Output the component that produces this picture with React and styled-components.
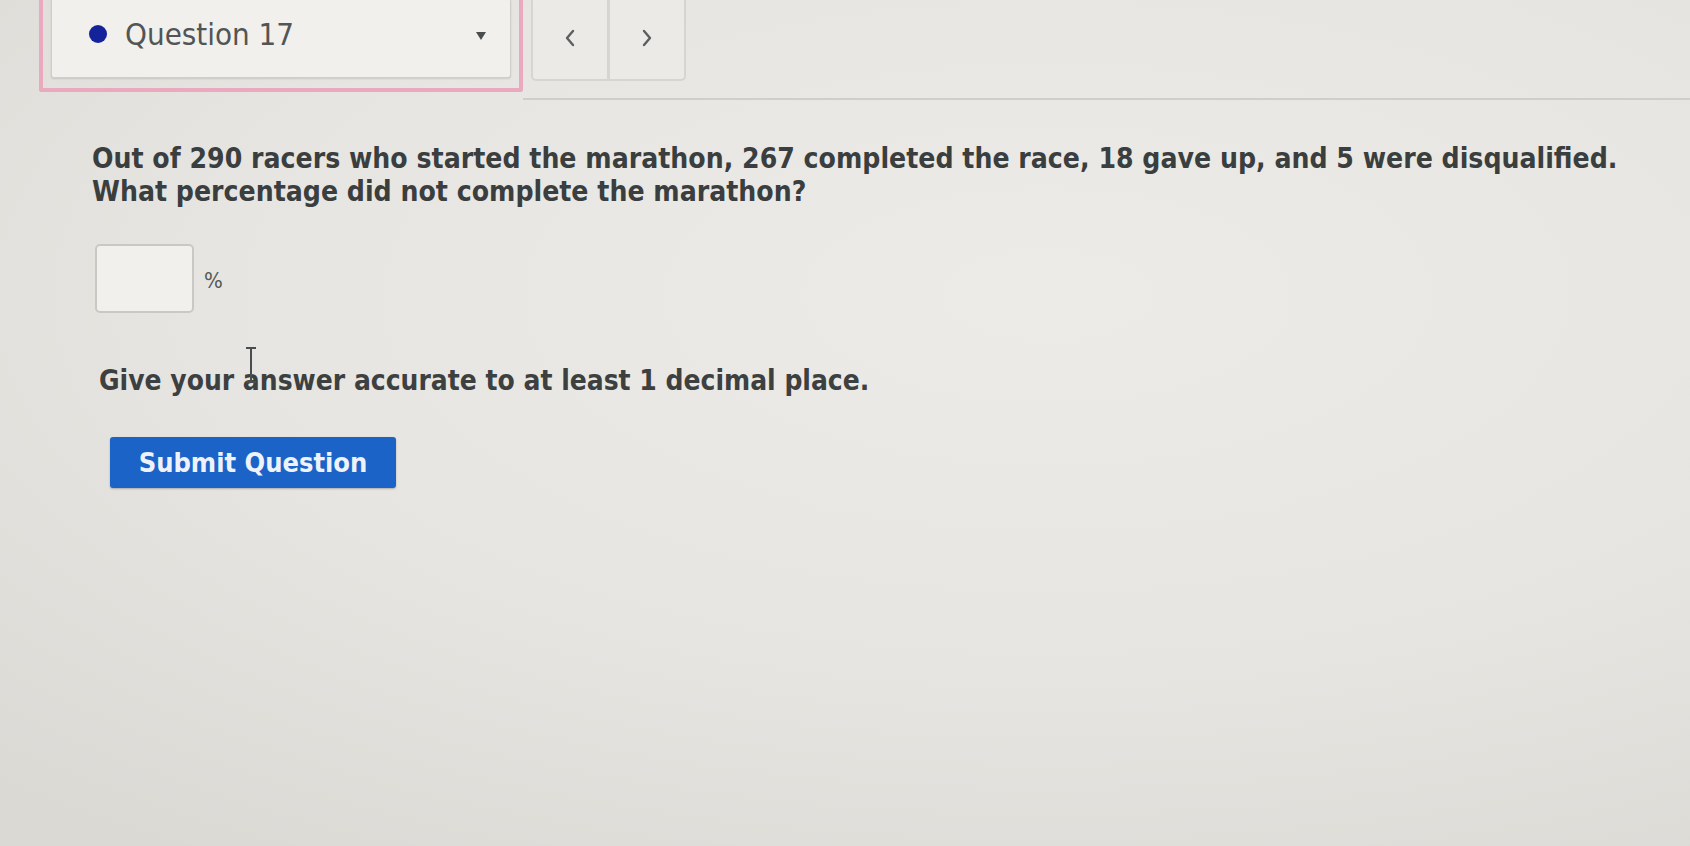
import React from "react";
import styled, { createGlobalStyle } from "styled-components";

const GlobalStyle = createGlobalStyle`
  html, body {
    margin: 0;
    padding: 0;
    height: 100%;
  }
  body {
    background: radial-gradient(ellipse 90% 80% at 62% 35%, #ecebe7 0%, #e6e5e1 55%, #dad9d4 100%);
    font-family: "DejaVu Sans Condensed", "DejaVu Sans", sans-serif;
    color: #3d3f3f;
    overflow: hidden;
  }
`;

const Page = styled.div`
  width: 1690px;
  height: 846px;
  position: relative;
`;

const TopBar = styled.div`
  display: flex;
  align-items: flex-start;
  padding-left: 39px;
`;

const PinkFrame = styled.div`
  width: 460px;
  height: 80px;
  padding: 0 8px 8px;
  border: 4px solid #e9a9bf;
  border-top: none;
  border-radius: 0 0 3px 3px;
`;

const Selector = styled.div`
  height: 78px;
  box-sizing: border-box;
  display: flex;
  align-items: center;
  padding: 0 24px 10px 37px;
  background: #f1f0ed;
  border: 1px solid #cfceca;
  border-top: none;
  border-radius: 0 0 3px 3px;
  box-shadow: 0 1px 2px rgba(0, 0, 0, 0.12);
`;

const Dot = styled.span`
  width: 18px;
  height: 18px;
  border-radius: 50%;
  background: #14239a;
  margin-right: 18px;
  flex-shrink: 0;
`;

const SelectorLabel = styled.span`
  font-size: 31px;
  color: #525555;
  flex: 1;
`;

const Caret = styled.span`
  width: 0;
  height: 0;
  border-left: 5px solid transparent;
  border-right: 5px solid transparent;
  border-top: 8px solid #4a4d4d;
  margin-top: 4px;
`;

const NavArea = styled.div`
  flex: 1;
  height: 100px;
  border-bottom: 2px solid #cfcecb;
  padding-left: 8px;
  box-sizing: border-box;
`;

const NavGroup = styled.div`
  display: flex;
  width: 155px;
  height: 81px;
  border: 2px solid #d6d5d1;
  border-top: none;
  border-radius: 0 0 5px 5px;
  box-sizing: border-box;
  background: #ebeae6;
`;

const NavButton = styled.div`
  flex: 1;
  display: flex;
  align-items: center;
  justify-content: center;
  padding-bottom: 4px;
  color: #5b5f5d;
  & + & {
    border-left: 3px solid #d6d5d1;
  }
`;

const Content = styled.div`
  padding: 42px 0 0 92px;
`;

const Prompt = styled.p`
  margin: 0;
  font-size: 28.1px;
  font-weight: bold;
  line-height: 33px;
  color: #3b3e3e;
`;

const AnswerRow = styled.div`
  display: flex;
  align-items: center;
  margin-top: 36px;
  margin-left: 3px;
`;

const AnswerBox = styled.div`
  width: 99px;
  height: 69px;
  box-sizing: border-box;
  border: 2px solid #c9c8c4;
  border-radius: 5px;
  background: #f1f0ed;
`;

const Unit = styled.span`
  font-size: 22px;
  color: #555857;
  margin-left: 10px;
  margin-top: 4px;
`;

const Hint = styled.p`
  margin: 51px 0 0 7px;
  font-size: 27.9px;
  font-weight: bold;
  color: #3d4040;
`;

const SubmitButton = styled.button`
  margin: 40px 0 0 18px;
  width: 286px;
  height: 51px;
  border: none;
  border-radius: 3px;
  background: #1c63c8;
  color: #eef2fa;
  font-family: "DejaVu Sans Condensed", "DejaVu Sans", sans-serif;
  font-size: 27px;
  font-weight: bold;
  box-shadow: 0 1px 2px rgba(0, 0, 0, 0.25);
  cursor: pointer;
`;

const TextCursor = styled.svg`
  position: absolute;
  left: 243px;
  top: 346px;
`;

function Chevron({ dir }) {
  const d = dir === "left" ? "M9 2 L3 9 L9 16" : "M3 2 L9 9 L3 16";
  return (
    <svg width="12" height="18" viewBox="0 0 12 18">
      <path d={d} fill="none" stroke="currentColor" strokeWidth="2.4" strokeLinecap="round" strokeLinejoin="round" />
    </svg>
  );
}

export default function App() {
  return (
    <Page>
      <GlobalStyle />
      <TopBar>
        <PinkFrame>
          <Selector>
            <Dot />
            <SelectorLabel>Question 17</SelectorLabel>
            <Caret />
          </Selector>
        </PinkFrame>
        <NavArea>
          <NavGroup>
            <NavButton>
              <Chevron dir="left" />
            </NavButton>
            <NavButton>
              <Chevron dir="right" />
            </NavButton>
          </NavGroup>
        </NavArea>
      </TopBar>

      <Content>
        <Prompt>
          Out of 290 racers who started the marathon, 267 completed the race, 18 gave up, and 5 were disqualified.
          <br />
          What percentage did not complete the marathon?
        </Prompt>

        <AnswerRow>
          <AnswerBox />
          <Unit>%</Unit>
        </AnswerRow>

        <Hint>Give your answer accurate to at least 1 decimal place.</Hint>

        <SubmitButton>Submit Question</SubmitButton>
      </Content>

      <TextCursor width="16" height="38" viewBox="0 0 16 38">
        <path d="M3 2 H13 M8 2 V36 M3 36 H13" stroke="#4a4d4d" strokeWidth="2" fill="none" />
      </TextCursor>
    </Page>
  );
}
